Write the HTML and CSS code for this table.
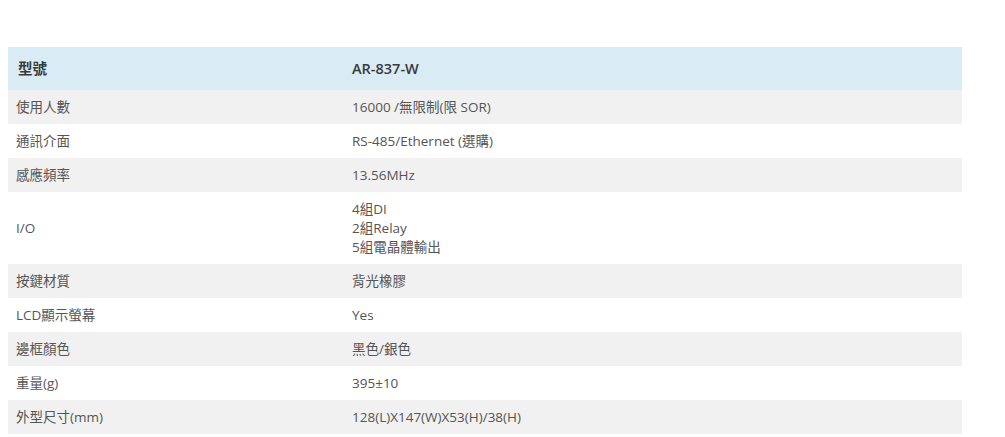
FILE: index.html
```html
<!DOCTYPE html>
<html lang="zh-Hant">
<head>
<meta charset="utf-8">
<link rel="stylesheet" href="styles.css">
</head>
<body>
<div class="page">
<table class="spec">
  <colgroup><col class="ck"><col class="cv"></colgroup>
  <thead>
    <tr><th class="k">型號</th><th class="v">AR-837-W</th></tr>
  </thead>
  <tbody>
    <tr><td class="k">使用人數</td><td class="v">16000 /無限制(限 SOR)</td></tr>
    <tr><td class="k">通訊介面</td><td class="v">RS-485/Ethernet (選購)</td></tr>
    <tr><td class="k">感應頻率</td><td class="v">13.56MHz</td></tr>
    <tr><td class="k">I/O</td><td class="v">4組DI<br>2組Relay<br>5組電晶體輸出</td></tr>
    <tr><td class="k">按鍵材質</td><td class="v">背光橡膠</td></tr>
    <tr><td class="k">LCD顯示螢幕</td><td class="v">Yes</td></tr>
    <tr><td class="k">邊框顏色</td><td class="v">黑色/銀色</td></tr>
    <tr><td class="k">重量(g)</td><td class="v">395±10</td></tr>
    <tr><td class="k">外型尺寸(mm)</td><td class="v">128(L)X147(W)X53(H)/38(H)</td></tr>
  </tbody>
</table>
</div>
</body>
</html>
```
FILE: styles.css
```css
html, body {
  margin: 0;
  padding: 0;
  background: #fff;
}
.page {
  padding: 47px 43px 0 8px;
}
.spec {
  width: 954px;
  table-layout: fixed;
  border-collapse: collapse;
  font-family: "Open Sans", "Noto Sans CJK TC", sans-serif;
  font-size: 13.5px;
  line-height: 19px;
  color: #555;
}
.spec .ck { width: 336px; }
.spec th, .spec td {
  text-align: left;
  vertical-align: middle;
  padding: 8px 8px 7px 8px;
}
.spec thead th {
  background: #d9ebf5;
  color: #3a3a3a;
  font-weight: 600;
  font-size: 14.5px;
  padding: 12px 10px 12px 10px;
}
.spec thead th.v { padding-left: 8px; }
.spec tbody tr:nth-child(odd) { background: #f1f1f1; }
.spec tbody tr:nth-child(even) { background: #fff; }
```
